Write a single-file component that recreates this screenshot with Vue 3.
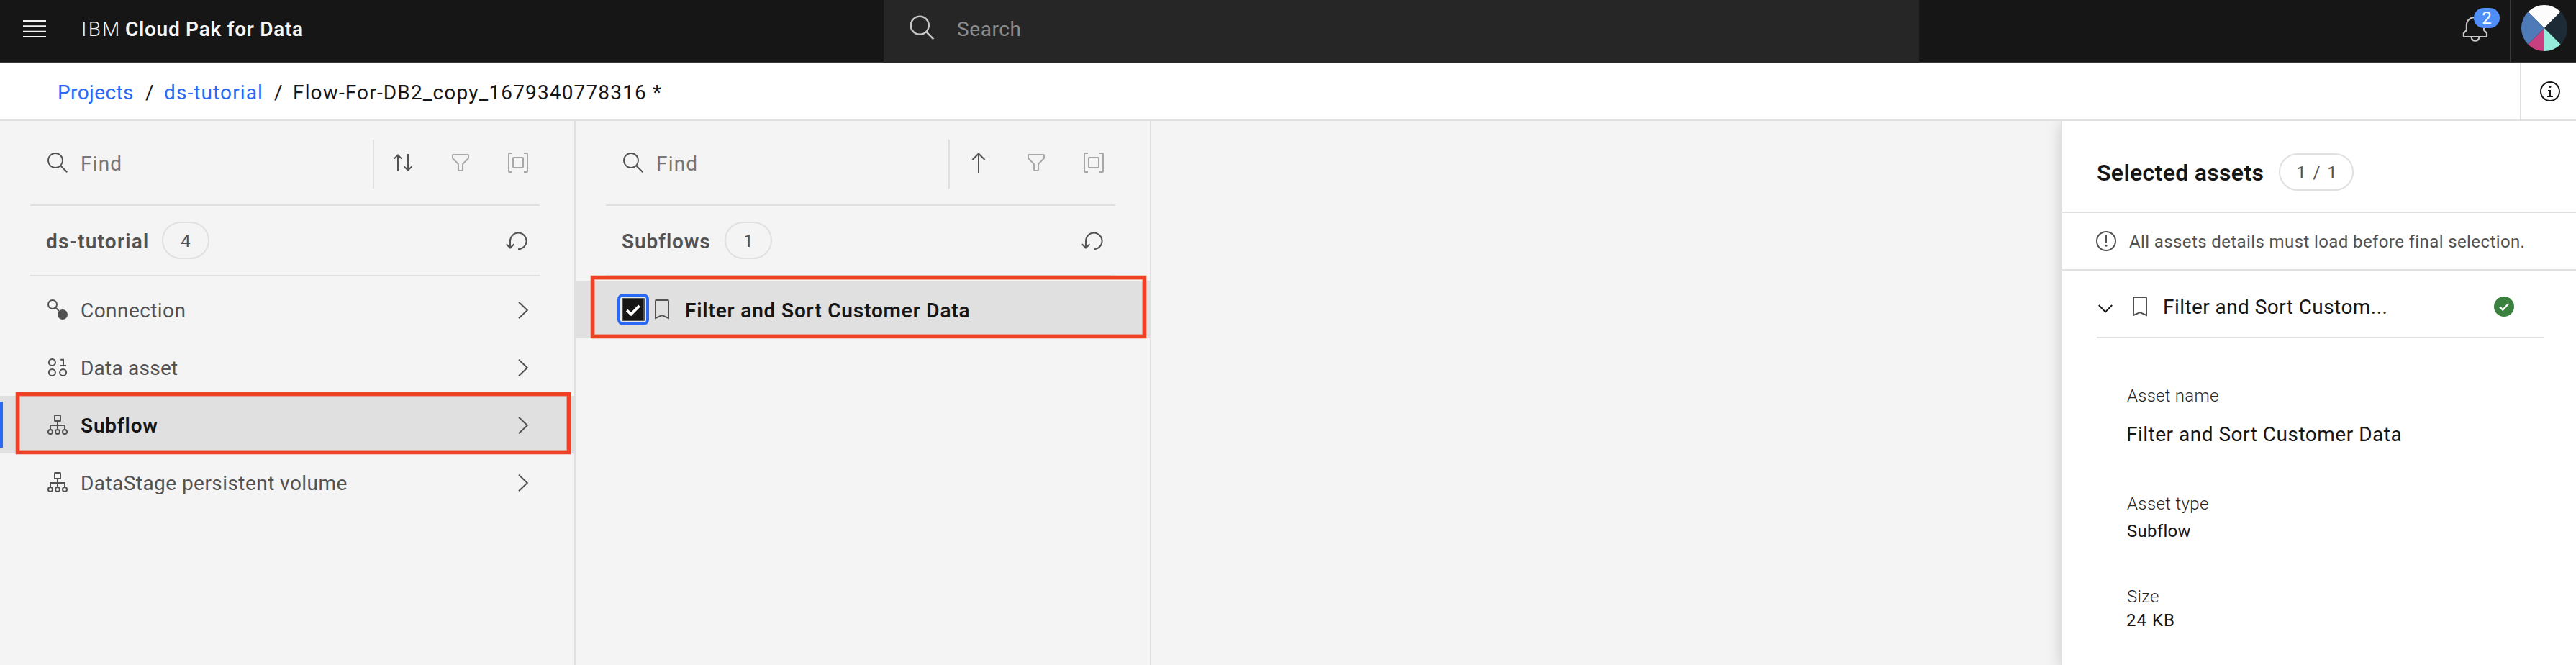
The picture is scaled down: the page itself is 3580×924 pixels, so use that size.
<script setup>
const assetTypes = [
  { label: 'Connection', icon: 'connection', cls: 'ls-connection' },
  { label: 'Data asset', icon: 'data', cls: 'ls-data' },
  { label: 'Subflow', icon: 'flow', cls: 'ls-subflow', selected: true },
  { label: 'DataStage persistent volume', icon: 'flow', cls: 'ls-volume' }
]
const columns = [
  { title: 'ds-tutorial', count: '4', sort: 'both', cls: 'ls-ds', items: assetTypes },
  { title: 'Subflows', count: '1', sort: 'up', cls: 'ls-subflows', items: [] }
]
</script>

<template>
  <div class="page">
    <header class="topbar">
      <div class="brand-area">
        <svg class="menu" width="32" height="24" viewBox="0 0 32 24"><path d="M0 1H32M0 8.3H32M0 15.7H32M0 23H32" /></svg>
        <div class="brand"><span class="brand-ibm">IBM</span><span class="brand-name">Cloud Pak for Data</span></div>
      </div>
      <div class="search">
        <svg width="40" height="40" viewBox="0 0 32 32" fill="#c6c6c6"><path d="M29,27.5859l-7.5521-7.5521a11.0177,11.0177,0,1,0-1.4141,1.4141L27.5859,29ZM4,13a9,9,0,1,1,9,9A9.01,9.01,0,0,1,4,13Z" /></svg>
        <span class="search-text">Search</span>
      </div>
      <div class="top-actions">
        <div class="bell">
          <svg width="40" height="40" viewBox="0 0 40 40" fill="none" stroke="#c6c6c6" stroke-width="2.2"><path d="M3.9 31V25.9L7.9 21.8V15C7.9 8.5 13 3.9 20 3.9S32.1 8.5 32.1 15V21.8L36 25.9V31Z" /><path d="M14.6 32a5.5 5.8 0 0 0 10.8 0" /></svg>
          <span class="badge">2</span>
        </div>
        <div class="avatar">
          <svg width="64" height="64" viewBox="-32 -32 64 64">
            <path fill="#fcfcfc" d="M0 0L-22.63-22.63A32 32 0 0 1 22.63-22.63Z" />
            <path fill="#1c2b36" d="M0 0L22.63-22.63A32 32 0 0 1 22.63 22.63Z" />
            <path fill="#95ecdb" d="M0 0L22.63 22.63A32 32 0 0 1 0 32Z" />
            <path fill="#c94080" d="M0 0V32A32 32 0 0 1-22.63 22.63Z" />
            <path fill="#4f7ab8" d="M0 0L-22.63 22.63A32 32 0 0 1-22.63-22.63Z" />
          </svg>
        </div>
      </div>
    </header>

    <nav class="crumbs">
      <a class="crumb-projects">Projects</a><span class="slash s1">/</span>
      <a class="crumb-ds">ds-tutorial</a><span class="slash s2">/</span>
      <span class="crumb-flow">Flow-For-DB2_copy_1679340778316 *</span>
      <div class="info">
        <svg width="32" height="32" viewBox="0 0 32 32" fill="#161616"><circle cx="16" cy="16" r="13" fill="none" stroke="#161616" stroke-width="2" /><path d="M17 22v-8h-4v2h2v6h-3v2h8v-2zM16 8a1.5 1.5 0 1 0 1.5 1.5A1.5 1.5 0 0 0 16 8z" /></svg>
      </div>
    </nav>

    <main class="body">
      <section v-for="(col, i) in columns" :key="col.title" class="column">
        <div class="tools">
          <svg width="32" height="32" viewBox="0 0 16 16" fill="#525252"><path d="M15 14.3L10.7 10c1.9-2.3 1.6-5.8-.7-7.7S4.2.7 2.3 3 .7 8.8 3 10.7c2 1.7 5 1.7 7 0l4.3 4.3.7-.7zM2 6.5C2 4 4 2 6.5 2S11 4 11 6.5 9 11 6.5 11 2 9 2 6.5z" /></svg>
          <span class="find">Find</span>
          <div class="tool-icons">
            <svg v-if="col.sort === 'both'" class="line" width="32" height="32" viewBox="0 0 32 32"><path d="M9 28V5M3.7 10.6L9 5.3l5.3 5.3M23 4V27M17.7 21.4L23 26.7l5.3-5.3" /></svg>
            <svg v-else class="line" width="32" height="32" viewBox="0 0 32 32"><path d="M16 30V3.5M7.5 12L16 3.5 24.5 12" /></svg>
            <svg width="32" height="32" viewBox="0 0 32 32" fill="#a8a8a8"><path d="M18,28H14a2,2,0,0,1-2-2V18.41L4.59,11A2,2,0,0,1,4,9.59V6A2,2,0,0,1,6,4H26a2,2,0,0,1,2,2V9.59A2,2,0,0,1,27.41,11L20,18.41V26A2,2,0,0,1,18,28ZM6,6V9.59l8,8V26h4V17.59l8-8V6Z" /></svg>
            <svg class="line pale" width="32" height="32" viewBox="0 0 32 32"><path d="M8 3H4a1 1 0 0 0-1 1V28a1 1 0 0 0 1 1H8M24 3h4a1 1 0 0 1 1 1V28a1 1 0 0 1-1 1H24" /><rect x="9" y="9" width="14" height="14" rx="1" /></svg>
          </div>
        </div>
        <div class="heading">
          <span class="title" :class="col.cls">{{ col.title }}</span>
          <span class="pill">{{ col.count }}</span>
          <svg class="line refresh" width="32" height="32" viewBox="0 0 32 32"><path d="M16 28.2A11.3 11.3 0 1 0 5 17V26.5M-.2 21.3L5 26.5 10.4 21.3" /></svg>
        </div>

        <ul class="list">
          <li v-for="item in col.items" :key="item.label" class="row" :class="{ selected: item.selected }">
            <svg class="line" width="32" height="32" viewBox="0 0 32 32">
              <template v-if="item.icon === 'connection'"><circle cx="9" cy="9" r="6" /><path d="M13 13L18 18" /><circle cx="23" cy="23" r="7" fill="#525252" stroke="none" /></template>
              <template v-else-if="item.icon === 'data'"><circle cx="8.4" cy="9.4" r="4.5" /><circle cx="8.4" cy="23.4" r="4.5" /><circle cx="23.6" cy="23.4" r="4.5" /><path d="M20.2 5.8H24V14M20 14H28" /></template>
              <template v-else><rect x="12" y="3" width="8" height="8" rx=".5" /><path d="M16 11V22M6 22V17H26V22" /><circle cx="6" cy="26" r="3" /><circle cx="16" cy="26" r="3" /><circle cx="26" cy="26" r="3" /></template>
            </svg>
            <span class="row-label" :class="item.cls">{{ item.label }}</span>
            <svg class="line chevron" width="14" height="24" viewBox="0 0 14 24"><path d="M1 .8L12.8 12 1 23.2" /></svg>
          </li>
          <li v-if="i === 1" class="row selected asset">
            <span class="focus"><span class="box"><svg width="32" height="32" viewBox="0 0 32 32"><path d="M7.2 17.2L13 22.6 24.6 10.8" fill="none" stroke="#fff" stroke-width="3.8" /></svg></span></span>
            <svg class="line bookmark" width="20" height="28" viewBox="0 0 20 28"><path d="M1 26V2a1 1 0 0 1 1-1H18a1 1 0 0 1 1 1V26L10 22Z" /></svg>
            <span class="row-label ls-asset">Filter and Sort Customer Data</span>
          </li>
        </ul>
        <div class="mark" :class="'mark-' + i"></div>
      </section>

      <aside class="side">
        <div class="side-head"><span class="side-title">Selected assets</span><span class="pill wide">1 / 1</span></div>
        <div class="notice">
          <svg class="line" width="28" height="28" viewBox="0 0 28 28"><circle cx="14" cy="14" r="13" /><path d="M14 6V16.5" /><circle cx="14" cy="20.3" r="1.5" fill="#525252" stroke="none" /></svg>
          <span>All assets details must load before final selection.</span>
        </div>
        <div class="accordion">
          <svg class="down" width="20" height="12" viewBox="0 0 20 12"><path d="M.8 1L10 10.4 19.2 1" /></svg>
          <svg class="line" width="20" height="28" viewBox="0 0 20 28"><path d="M1 26V2a1 1 0 0 1 1-1H18a1 1 0 0 1 1 1V26L10 22Z" /></svg>
          <span class="acc-label">Filter and Sort Custom...</span>
          <svg class="ok" width="28" height="28" viewBox="0 0 28 28"><circle cx="14" cy="14" r="14" fill="#3a803e" /><path d="M7.8 14.2L12.2 18.6 20.4 9.8" fill="none" stroke="#fff" stroke-width="2.4" /></svg>
        </div>
        <dl class="details">
          <dt class="l-name">Asset name</dt><dd class="v-name">Filter and Sort Customer Data</dd>
          <dt class="l-type">Asset type</dt><dd class="v-type">Subflow</dd>
          <dt class="l-size">Size</dt><dd class="v-size">24 KB</dd>
        </dl>
      </aside>
    </main>
  </div>
</template>

<style>
body { margin: 0; overflow: hidden; }
</style>

<style scoped>
.page { width: 3580px; height: 924px; display: flex; flex-direction: column; overflow: hidden; background: #f4f4f4; color: #161616; font-family: Roboto, "Liberation Sans", sans-serif; font-size: 28px; line-height: 40px; white-space: nowrap; }
.page * { box-sizing: border-box; }
svg { display: block; flex: none; overflow: visible; }
.line { fill: none; stroke: #525252; stroke-width: 2; }
.pale { stroke: #a8a8a8; }

.topbar { flex: none; height: 88px; display: grid; grid-template-columns: 1228px 1439px 1fr; background: #161616; border-bottom: 2px solid #393939; color: #f4f4f4; }
.brand-area { display: flex; align-items: center; padding: 0 0 6px 32px; }
.menu { fill: none; stroke: #f4f4f4; stroke-width: 2; margin-top: -2px; }
.brand { display: flex; margin-left: 49px; padding-top: 1px; }
.brand-ibm { width: 61px; font-weight: 300; letter-spacing: 2.2px; }
.brand-name { font-weight: 600; letter-spacing: .72px; }
.search { display: flex; align-items: center; height: 87px; padding: 0 0 7px 34px; background: #262626; }
.search svg { margin-top: -3px; }
.search-text { margin-left: 28px; padding-top: 2px; color: #8d8d8d; letter-spacing: .58px; }
.top-actions { display: flex; justify-content: flex-end; }
.bell { position: relative; padding: 20px 28px 0 0; }
.badge { position: absolute; left: 18px; top: 11px; width: 36px; height: 28px; border-radius: 14px; background: #4f8df9; color: #fff; font-size: 24px; line-height: 29px; text-align: center; }
.avatar { width: 92px; border-left: 2px solid #393939; padding: 7px 0 0 14px; }

.crumbs { flex: none; height: 80px; display: flex; align-items: center; background: #fff; border-bottom: 2px solid #e0e0e0; padding-left: 80px; }
.crumbs > a, .crumbs > span { padding-top: 4px; }
.crumbs a { color: #2a69f5; }
.crumb-projects { width: 122px; letter-spacing: .4px; }
.s1 { width: 26px; }
.crumb-ds { width: 153px; letter-spacing: 1.1px; }
.s2 { width: 26px; }
.crumb-flow { letter-spacing: 1.15px; }
.info { margin-left: auto; width: 78px; height: 78px; border-left: 2px solid #e0e0e0; padding: 23px 0 0 24px; }

.body { flex: 1; display: flex; min-height: 0; overflow: hidden; }
.column { position: relative; flex: none; width: 800px; border-right: 2px solid #e0e0e0; }
.tools { height: 118px; margin: 0 48px 0 42px; padding-left: 22px; border-bottom: 2px solid #e0e0e0; display: flex; align-items: center; }
.find { margin-left: 16px; padding-top: 4px; color: #767676; letter-spacing: 1.2px; }
.tool-icons { margin: 4px -10px 0 auto; width: 242px; height: 68px; border-left: 2px solid #e0e0e0; display: flex; padding: 16px 0 0 24px; gap: 48px; }
.heading { height: 98px; margin: 0 48px 6px 42px; padding: 0 14px 0 22px; border-bottom: 2px solid #e0e0e0; display: flex; align-items: center; color: #525252; }
.title { padding-top: 4px; font-weight: 600; }
.pill { width: 66px; height: 52px; border: 2px solid #e0e0e0; border-radius: 26px; font-size: 24px; line-height: 50px; text-align: center; color: #525252; }
.ls-ds { width: 161px; letter-spacing: 1.22px; }
.ls-subflows { width: 143px; letter-spacing: .88px; }
.refresh { margin-left: auto; }
.list { list-style: none; margin: 0; padding: 0; }
.row { height: 80px; display: flex; align-items: center; padding: 0 64px; color: #525252; }
.row.selected { background: #e0e0e0; color: #161616; font-weight: 600; }
.row.selected:not(.asset) { background: linear-gradient(#2a69f5, #2a69f5) 0 50% / 4px 64px no-repeat #e0e0e0; }
.row-label { margin-left: 16px; padding-top: 3px; }
.ls-connection { letter-spacing: .44px; }
.ls-data { letter-spacing: .23px; }
.ls-subflow { letter-spacing: .8px; }
.ls-volume { letter-spacing: .44px; }
.chevron { margin: 2px 0 0 auto; }
.row.asset { padding-left: 58px; }
.focus { width: 44px; height: 44px; border: 4px solid #2a69f5; border-radius: 8px; padding: 2px; background: #ececec; }
.box { display: block; width: 32px; height: 32px; background: #161616; border-radius: 2px; box-shadow: inset 0 0 0 2px #525252; }
.bookmark { margin-left: 8px; }
.ls-asset { margin-left: 22px; letter-spacing: .83px; }
.mark { position: absolute; border: 5px solid #ee4126; box-shadow: 0 0 0 .5px rgba(238, 65, 38, .5), inset 0 0 0 1px rgba(238, 65, 38, .4); }
.mark-0 { left: 22px; top: 377px; width: 771px; height: 86px; }
.mark-1 { left: 21px; top: 215px; width: 772px; height: 87px; }

.side { margin-left: auto; flex: none; width: 716px; background: #fff; border-left: 2px solid #e0e0e0; box-shadow: 0 4px 20px rgba(0, 0, 0, .17); }
.side-head { height: 128px; border-bottom: 2px solid #e0e0e0; padding: 16px 0 0 48px; display: flex; align-items: center; }
.side-title { width: 253px; font-size: 32px; font-weight: 600; letter-spacing: .32px; padding-top: 2px; }
.wide { width: 104px; letter-spacing: 1.9px; padding-left: 3px; }
.notice { height: 80px; border-bottom: 2px solid #e0e0e0; display: flex; align-items: center; padding-left: 47px; gap: 18px; font-size: 24px; color: #525252; letter-spacing: .39px; }
.notice span { padding-top: 1px; }
.accordion { height: 94px; margin: 0 44px 0 48px; border-bottom: 2px solid #e0e0e0; padding: 8px 42px 0 2px; display: flex; align-items: center; }
.down { fill: none; stroke: #161616; stroke-width: 2; margin: 5px 28px 0 0; }
.acc-label { margin-left: 22px; padding-top: 1px; letter-spacing: .43px; }
.ok { margin-left: auto; }
.details { margin: 0; padding: 64px 0 0 90px; }
.details dt, .details dd { margin: 0; font-size: 24px; line-height: 32px; }
.details dt { font-weight: 300; color: #262626; }
.l-name { letter-spacing: .26px; }
.details .v-name { margin: 18px 0 60px -1px; font-size: 28px; line-height: 40px; letter-spacing: .5px; }
.l-type { letter-spacing: .36px; }
.details .v-type { margin: 6px 0 59px; letter-spacing: .29px; }
.l-size { letter-spacing: .3px; }
.details .v-size { margin: 1px 0 0 -1px; letter-spacing: 1px; }
</style>
